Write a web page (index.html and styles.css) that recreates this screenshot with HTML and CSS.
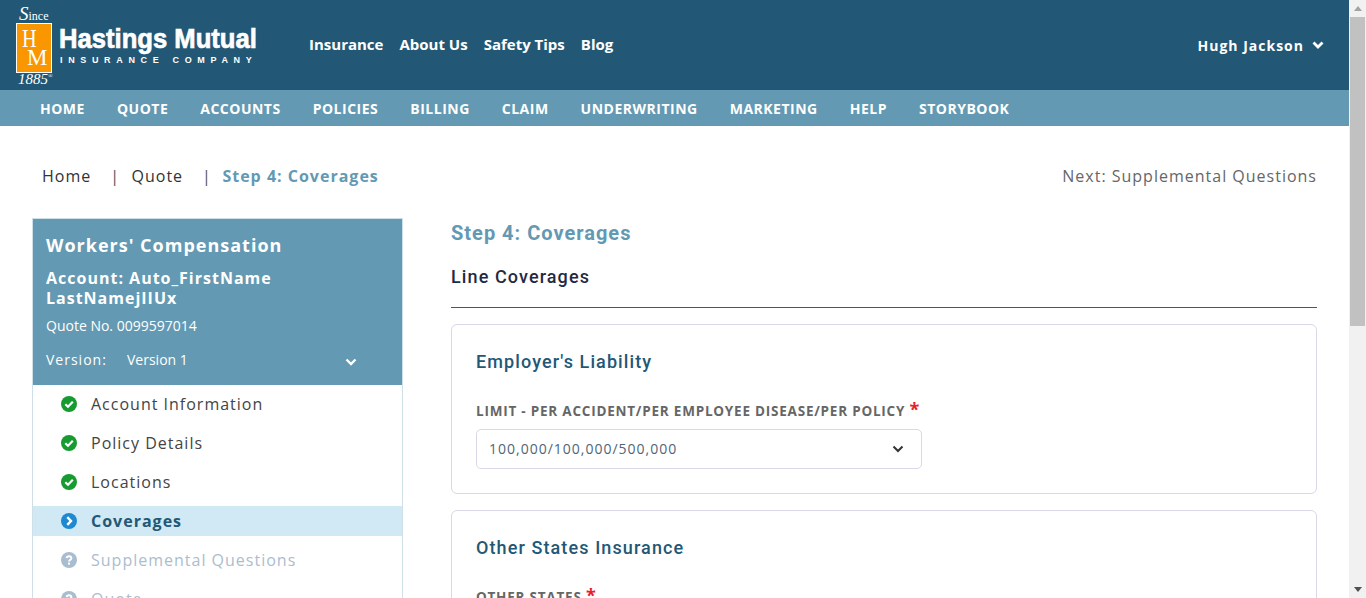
FILE: index.html
```html
<!DOCTYPE html>
<html lang="en">
<head>
    <meta charset="UTF-8">
    <title>Step 4: Coverages</title>
    <link rel="stylesheet" href="styles.css">
</head>
<body>
    <div class="page">
        <header class="top-bar">
            <div class="logo">
                <div class="logo-mark">
                    <span class="logo-since"><span class="logo-s">S</span>ince</span>
                    <div class="logo-box"><span class="logo-h">H</span><span class="logo-m">M</span></div>
                    <span class="logo-year">1885<span class="logo-reg">®</span></span>
                </div>
                <div class="logo-text">
                    <span class="logo-name">Hastings Mutual</span>
                    <span class="logo-sub">INSURANCE COMPANY</span>
                </div>
            </div>
            <nav class="top-links">
                <a>Insurance</a>
                <a>About Us</a>
                <a>Safety Tips</a>
                <a>Blog</a>
            </nav>
            <div class="user">
                Hugh Jackson
                <svg class="chev-white chev-user" viewBox="0 0 12 8"><path d="M1.5 1.5 6 6l4.500-4.500" /></svg>
            </div>
        </header>
        <nav class="main-nav">
            <a>HOME</a>
            <a>QUOTE</a>
            <a>ACCOUNTS</a>
            <a>POLICIES</a>
            <a>BILLING</a>
            <a>CLAIM</a>
            <a>UNDERWRITING</a>
            <a>MARKETING</a>
            <a>HELP</a>
            <a>STORYBOOK</a>
        </nav>
        <div class="crumbs">
            <a class="crumb">Home</a>
            <a class="crumb crumb-sep">Quote</a>
            <a class="crumb crumb-sep crumb-now">Step 4: Coverages</a>
            <span class="next">Next: Supplemental Questions</span>
        </div>
        <div class="content">
            <aside class="sidebar">
                <div class="side-head">
                    <h2>Workers' Compensation</h2>
                    <h3>Account: Auto_FirstName LastNamejIIUx</h3>
                    <p class="quote-no">Quote No. 0099597014</p>
                    <div class="version">
                        <span class="version-label">Version:</span>
                        <span class="version-value">Version 1</span>
                        <svg class="chev-white" viewBox="0 0 12 8"><path d="M1.5 1.5 6 6l4.500-4.500" /></svg>
                    </div>
                </div>
                <ul class="steps">
                    <li class="step">
                        <svg class="step-icon" viewBox="0 0 16 16"><circle cx="8" cy="8" r="8" fill="#169b30" /><path d="M4.300 8.200 7 10.800l4.800-5" fill="none" stroke="#fff" stroke-width="2.200" /></svg>
                        Account Information
                    </li>
                    <li class="step">
                        <svg class="step-icon" viewBox="0 0 16 16"><circle cx="8" cy="8" r="8" fill="#169b30" /><path d="M4.300 8.200 7 10.800l4.800-5" fill="none" stroke="#fff" stroke-width="2.200" /></svg>
                        Policy Details
                    </li>
                    <li class="step">
                        <svg class="step-icon" viewBox="0 0 16 16"><circle cx="8" cy="8" r="8" fill="#169b30" /><path d="M4.300 8.200 7 10.800l4.800-5" fill="none" stroke="#fff" stroke-width="2.200" /></svg>
                        Locations
                    </li>
                    <li class="step step-now">
                        <svg class="step-icon" viewBox="0 0 16 16"><circle cx="8" cy="8" r="8" fill="#1e88d0" /><path d="M6.300 4.200 10 8l-3.700 3.800" fill="none" stroke="#fff" stroke-width="2.400" /></svg>
                        Coverages
                    </li>
                    <li class="step step-todo">
                        <svg class="step-icon" viewBox="0 0 16 16"><circle cx="8" cy="8" r="8" fill="#a9bdd0" /><path d="M5.600 6.200C5.800 4.800 6.800 4.200 8 4.200c1.400 0 2.400.8 2.400 2 0 1.700-2.400 1.600-2.400 3.300" fill="none" stroke="#fff" stroke-width="1.900" /><rect x="7" y="10.600" width="2" height="2" fill="#fff" /></svg>
                        Supplemental Questions
                    </li>
                    <li class="step step-todo">
                        <svg class="step-icon" viewBox="0 0 16 16"><circle cx="8" cy="8" r="8" fill="#a9bdd0" /><path d="M5.600 6.200C5.800 4.800 6.800 4.200 8 4.200c1.400 0 2.400.8 2.400 2 0 1.700-2.400 1.600-2.400 3.300" fill="none" stroke="#fff" stroke-width="1.900" /><rect x="7" y="10.600" width="2" height="2" fill="#fff" /></svg>
                        Quote
                    </li>
                </ul>
            </aside>
            <main class="main">
                <h1 class="step-title">Step 4: Coverages</h1>
                <h2 class="line-title">Line Coverages</h2>
                <section class="card">
                    <h3 class="card-title">Employer's Liability</h3>
                    <label class="field-label">LIMIT - PER ACCIDENT/PER EMPLOYEE DISEASE/PER POLICY <span class="req">*</span></label>
                    <div class="select">
                        100,000/100,000/500,000
                        <svg class="chev-dark" viewBox="0 0 12 8"><path d="M1.500 1.500 6 6l4.500-4.500" /></svg>
                    </div>
                </section>
                <section class="card">
                    <h3 class="card-title">Other States Insurance</h3>
                    <label class="field-label">OTHER STATES <span class="req">*</span></label>
                </section>
            </main>
        </div>
    </div>
    <div class="scrollbar">
        <span class="arrow-up"></span>
        <div class="thumb"></div>
        <span class="arrow-down"></span>
    </div>
</body>
</html>
```

FILE: styles.css
```css
html, body {
    height: 598px;
    overflow: hidden;
}
body {
    margin: 0;
    display: flex;
    background-color: white;
    color: #333;
    font-family: "Open Sans", sans-serif;
}
.page {
    flex: 1;
    min-width: 0;
    height: 598px;
    overflow: hidden;
}
h1, h2, h3, p, ul {
    margin: 0;
    padding: 0;
}

/* top bar */
.top-bar {
    height: 90px;
    background-color: #225875;
    color: white;
    display: flex;
    align-items: center;
}
.logo {
    display: flex;
    align-items: center;
    width: 309px;
    padding-left: 16px;
    box-sizing: border-box;
    flex-shrink: 0;
}
.logo-mark {
    width: 36px;
    margin-top: 2px;
    display: flex;
    flex-direction: column;
    font-family: "Liberation Serif", serif;
}
.logo-since {
    font-size: 12px;
    line-height: 13px;
    margin-left: 3px;
    white-space: nowrap;
}
.logo-s {
    font-size: 19px;
    font-style: italic;
}
.logo-box {
    height: 50px;
    background-color: #fa9600;
    border: 1px solid white;
    box-sizing: border-box;
    display: flex;
    flex-direction: column;
    padding-top: 5px;
}
.logo-h {
    font-size: 26px;
    line-height: 20px;
    height: 20px;
    margin-left: 5px;
    transform: scaleX(0.78);
    transform-origin: left center;
}
.logo-m {
    font-size: 23px;
    line-height: 17px;
    height: 17px;
    margin-left: 10px;
}
.logo-year {
    font-size: 15px;
    font-style: italic;
    line-height: 12px;
    margin-left: 2px;
    white-space: nowrap;
}
.logo-reg {
    font-size: 6px;
    vertical-align: 6px;
    line-height: 0;
}
.logo-text {
    display: flex;
    flex-direction: column;
    margin-left: 7px;
    margin-top: -1px;
}
.logo-name {
    font-family: "Liberation Sans", sans-serif;
    font-weight: bold;
    font-size: 28px;
    line-height: 28px;
    width: 198px;
    white-space: nowrap;
    -webkit-text-stroke: 0.7px white;
    transform: scaleX(0.915);
    transform-origin: left center;
}
.logo-sub {
    font-family: "Liberation Sans", sans-serif;
    font-size: 9px;
    font-weight: bold;
    line-height: 10px;
    margin-top: 2px;
    margin-left: 1px;
    letter-spacing: 5.65px;
    white-space: nowrap;
}
.top-links {
    display: flex;
    gap: 16px;
    font-size: 15px;
    font-weight: 700;
    margin-top: -2px;
}
.user {
    margin-left: auto;
    margin-right: 25px;
    font-size: 14px;
    font-weight: 700;
    letter-spacing: 1px;
    display: flex;
    align-items: center;
    gap: 8px;
    margin-top: 1px;
}
.chev-white {
    width: 12px;
    height: 8px;
    fill: none;
    stroke: white;
    stroke-width: 2.400;
}
.chev-user {
    stroke-width: 2.800;
    margin-top: -2px;
}

/* main nav */
.main-nav {
    height: 36px;
    background-color: #6399b2;
    color: white;
    display: flex;
    align-items: center;
    gap: 32px;
    padding-left: 40px;
    font-size: 14px;
    font-weight: 700;
    letter-spacing: 0.5px;
}

/* breadcrumbs */
.crumbs {
    display: flex;
    align-items: center;
    height: 20px;
    margin: 40px 32px 0 42px;
    font-size: 16px;
    letter-spacing: 1px;
}
.crumb-sep {
    margin-left: 19px;
}
.crumb-sep::before {
    content: "|";
    margin-right: 11.500px;
    color: #555;
    font-weight: 400;
}
.crumb-now {
    color: #6399b2;
    font-weight: 700;
}
.crumb-now::before {
    margin-right: 10.500px;
}
.next {
    margin-left: auto;
    color: #666;
}

/* sidebar */
.content {
    display: flex;
    padding-left: 32px;
    margin-top: 32px;
}
.sidebar {
    width: 371px;
    box-sizing: border-box;
    flex-shrink: 0;
    border: 1px solid #cfdfe8;
    height: 400px;
}
.side-head {
    background-color: #6399b2;
    color: white;
    height: 166px;
    box-sizing: border-box;
    padding: 13px 13px 0;
}
.side-head h2 {
    font-size: 18px;
    font-weight: 700;
    line-height: 26px;
    letter-spacing: 1px;
}
.side-head h3 {
    font-size: 16px;
    font-weight: 700;
    line-height: 20px;
    letter-spacing: 1px;
    margin-top: 10px;
    width: 290px;
}
.quote-no {
    font-size: 14px;
    line-height: 20px;
    margin-top: 8px;
}
.version {
    display: flex;
    align-items: center;
    font-size: 14px;
    line-height: 20px;
    margin-top: 14px;
}
.version-label {
    width: 81px;
    letter-spacing: 1px;
}
.version-value {
    width: 218px;
}
.version .chev-white {
    margin-top: 3px;
}
.steps {
    list-style: none;
    padding-top: 4px;
}
.step {
    height: 30px;
    margin-bottom: 9px;
    padding-left: 28px;
    display: flex;
    align-items: center;
    gap: 14px;
    font-size: 16px;
    letter-spacing: 1px;
    color: #444;
}
.step-icon {
    width: 16px;
    height: 16px;
    flex-shrink: 0;
}
.step-now {
    background-color: #d1e8f5;
    color: #225875;
    font-weight: 700;
}
.step-todo {
    color: #abbdce;
}

/* main column */
.main {
    flex: 1;
    min-width: 0;
    margin: 0 32px 0 48px;
}
.step-title {
    font-family: Roboto, sans-serif;
    font-size: 20px;
    font-weight: 700;
    line-height: 30px;
    letter-spacing: 1px;
    color: #6399b2;
}
.line-title {
    font-family: Roboto, sans-serif;
    font-size: 18px;
    font-weight: 500;
    line-height: 24px;
    letter-spacing: 1.100px;
    color: #1f2a44;
    margin-top: 17px;
    padding-bottom: 18px;
    border-bottom: 1px solid #555;
    margin-bottom: 16px;
}
.card {
    border: 1px solid #d8d8e8;
    border-radius: 6px;
    padding: 25px 24px 24px;
    margin-bottom: 16px;
    height: 170px;
    box-sizing: border-box;
}
.card-title {
    font-family: Roboto, sans-serif;
    font-size: 18px;
    font-weight: 500;
    line-height: 24px;
    letter-spacing: 1.100px;
    color: #225875;
}
.field-label {
    display: block;
    margin-top: 26px;
    font-size: 13.500px;
    font-weight: 700;
    line-height: 20px;
    letter-spacing: 0.780px;
    color: #666;
}
.req {
    color: #e8202a;
    font-size: 18px;
    line-height: 18px;
}
.select {
    width: 446px;
    height: 40px;
    box-sizing: border-box;
    margin-top: 8px;
    border: 1px solid #d8d8e8;
    border-radius: 5px;
    padding: 0 17px 2px 12px;
    display: flex;
    align-items: center;
    justify-content: space-between;
    font-size: 14px;
    letter-spacing: 1px;
    color: #4f6577;
}
.chev-dark {
    width: 12px;
    height: 8px;
    margin-top: 2px;
    fill: none;
    stroke: #333;
    stroke-width: 2;
}

/* scrollbar */
.scrollbar {
    width: 17px;
    height: 598px;
    flex-shrink: 0;
    background-color: #f1f1f1;
    display: flex;
    flex-direction: column;
    align-items: center;
}
.arrow-up {
    width: 0;
    height: 0;
    margin: 6px 0 6px;
    border-left: 4px solid transparent;
    border-right: 4px solid transparent;
    border-bottom: 5px solid #a3a3a3;
}
.thumb {
    width: 15px;
    height: 309px;
    background-color: #c1c1c1;
}
.arrow-down {
    width: 0;
    height: 0;
    margin-top: auto;
    margin-bottom: 6px;
    border-left: 4px solid transparent;
    border-right: 4px solid transparent;
    border-top: 5px solid #505050;
}
```
